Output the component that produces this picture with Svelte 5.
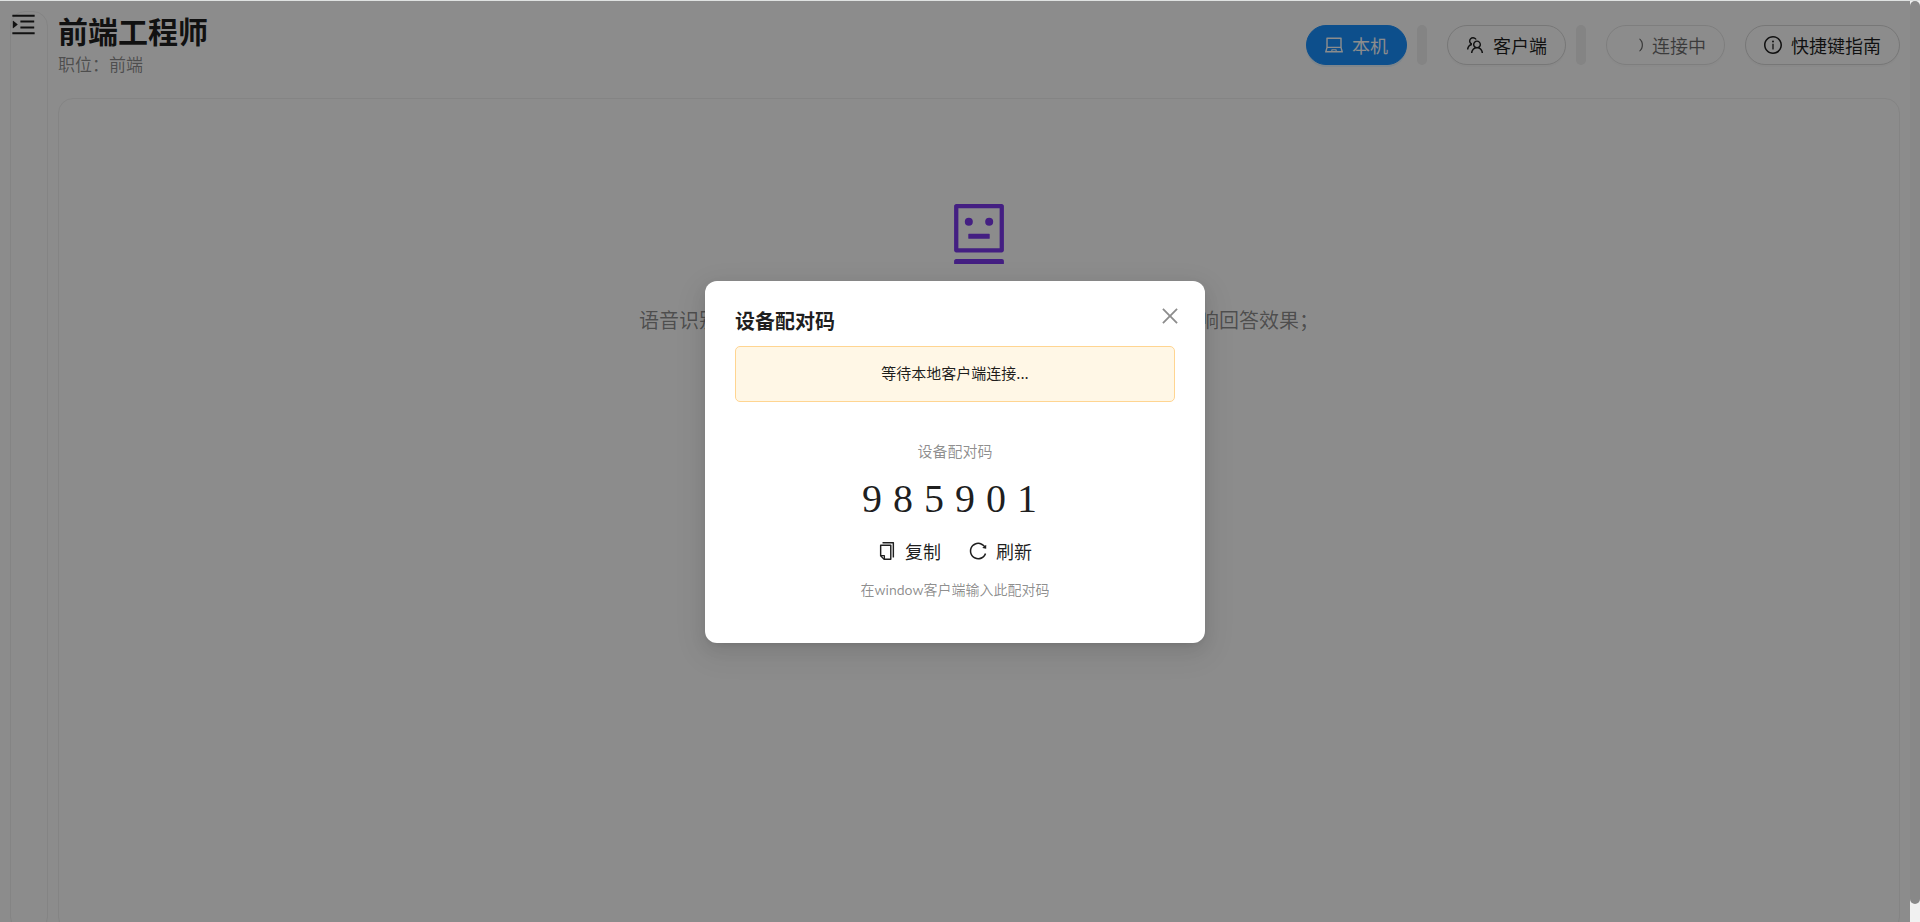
<script lang="ts">
  type IconName = 'menu' | 'laptop' | 'team' | 'loading' | 'info' | 'robot' | 'close' | 'copy' | 'reload';

  const iconPaths: Record<IconName, string[]> = {
    menu: ['M408 442h480c4.4 0 8-3.6 8-8v-56c0-4.4-3.6-8-8-8H408c-4.4 0-8 3.6-8 8v56c0 4.4 3.6 8 8 8zm-8 204c0 4.4 3.6 8 8 8h480c4.4 0 8-3.6 8-8v-56c0-4.4-3.6-8-8-8H408c-4.4 0-8 3.6-8 8v56zm504-486H120c-4.4 0-8 3.6-8 8v56c0 4.4 3.6 8 8 8h784c4.4 0 8-3.6 8-8v-56c0-4.4-3.6-8-8-8zm0 632H120c-4.4 0-8 3.6-8 8v56c0 4.4 3.6 8 8 8h784c4.4 0 8-3.6 8-8v-56c0-4.4-3.6-8-8-8zM142.4 642.1L298.7 519a8.84 8.84 0 000-13.9L142.4 381.9c-5.8-4.6-14.4-.5-14.4 6.9v246.3a8.9 8.9 0 0014.4 7z'],
    laptop: ['M956.9 845.1L896.4 632V168c0-17.7-14.3-32-32-32h-704c-17.7 0-32 14.3-32 32v464L67.9 845.1C60.4 866 75.8 888 98 888h828.8c22.2 0 37.6-22 30.1-42.9zM200.4 208h624v395h-624V208zm228.3 608l8.1-37h150.3l8.1 37H428.7zm224 0l-19.1-86.7c-.8-3.7-4.1-6.3-7.8-6.3H398.2c-3.8 0-7 2.6-7.8 6.3L371.3 816H151l42.3-149h638.2l42.3 149H652.7z'],
    team: ['M824.2 699.9a301.55 301.55 0 00-86.4-60.4C783.1 602.8 812 546.8 812 484c0-110.8-92.4-201.7-203.2-200-109.1 1.7-197 90.6-197 200 0 62.8 29 118.8 74.2 155.5a300.95 300.95 0 00-86.4 60.4C345 754.6 314 826.8 312 903.8a8 8 0 008 8.2h56c4.3 0 7.9-3.4 8-7.7 1.9-58 25.4-112.3 66.7-153.5A226.62 226.62 0 01612 684c60.9 0 118.2 23.7 161.3 66.8C814.6 792 838 846.3 840 904.3c.1 4.3 3.7 7.7 8 7.7h56a8 8 0 008-8.2c-2-77-33-149.2-87.8-203.9zM612 612c-34.2 0-66.4-13.3-90.5-37.5a126.86 126.86 0 01-37.5-91.8c.3-32.8 13.4-64.5 36.3-88 24-24.6 56.1-38.3 90.4-38.7 33.9-.3 66.8 12.9 91 36.6 24.8 24.3 38.4 56.8 38.4 91.4 0 34.2-13.3 66.3-37.5 90.5A127.3 127.3 0 01612 612zM361.5 510.4c-.9-8.7-1.4-17.5-1.4-26.4 0-15.9 1.5-31.4 4.3-46.5.7-3.6-1.2-7.3-4.5-8.8-13.6-6.1-26.1-14.5-36.9-25.1a127.54 127.54 0 01-38.7-95.4c.9-32.1 13.8-62.6 36.3-85.6 24.7-25.3 57.9-39.1 93.2-38.7 31.9.3 62.7 12.6 86 34.4 7.9 7.4 14.7 15.6 20.4 24.4 2 3.1 5.9 4.4 9.3 3.2 17.6-6.1 36.2-10.4 55.3-12.4 5.6-.6 8.8-6.6 6.3-11.6-32.5-64.3-98.9-108.7-175.7-109.9-110.9-1.7-203.3 89.2-203.3 199.9 0 62.8 28.9 118.8 74.2 155.5-31.8 14.7-61.1 35-86.5 60.4-54.8 54.7-85.8 126.9-87.8 204a8 8 0 008 8.2h56.1c4.3 0 7.9-3.4 8-7.7 1.9-58 25.4-112.3 66.7-153.5 29.4-29.4 65.4-49.8 104.7-59.7 3.9-1 6.5-4.7 6-8.7z'],
    loading: ['M988 548c-19.9 0-36-16.1-36-36 0-59.4-11.6-117-34.6-171.3a440.45 440.45 0 00-94.3-139.9 437.71 437.71 0 00-139.9-94.3C629 83.6 571.4 72 512 72c-19.9 0-36-16.1-36-36s16.1-36 36-36c69.1 0 136.2 13.5 199.3 40.3C772.3 66 827 103 874 150c47 47 83.9 101.8 109.7 162.7 26.7 63.1 40.2 130.2 40.2 199.3.1 19.9-16 36-35.9 36z'],
    info: [
      'M512 64C264.6 64 64 264.6 64 512s200.6 448 448 448 448-200.6 448-448S759.4 64 512 64zm0 820c-205.4 0-372-166.6-372-372s166.6-372 372-372 372 166.6 372 372-166.6 372-372 372z',
      'M464 336a48 48 0 1096 0 48 48 0 10-96 0zm72 112h-48c-4.4 0-8 3.6-8 8v272c0 4.4 3.6 8 8 8h48c4.4 0 8-3.6 8-8V456c0-4.4-3.6-8-8-8z'
    ],
    robot: [
      'M300 328a60 60 0 10120 0 60 60 0 10-120 0zM852 64H172c-17.7 0-32 14.3-32 32v660c0 17.7 14.3 32 32 32h680c17.7 0 32-14.3 32-32V96c0-17.7-14.3-32-32-32zm-32 660H204V128h616v596z',
      'M604 328a60 60 0 10120 0 60 60 0 10-120 0zm250.2 556H169.8c-16.5 0-29.8 14.3-29.8 32v36c0 4.4 3.3 8 7.4 8h729.1c4.1 0 7.4-3.6 7.4-8v-36c.1-17.7-13.2-32-29.7-32zM664 508H360c-4.4 0-8 3.6-8 8v60c0 4.4 3.6 8 8 8h304c4.4 0 8-3.6 8-8v-60c0-4.4-3.6-8-8-8z'
    ],
    close: ['M799.9 166.3c.1 0 .2.1.3.2l57.4 57.4c.1.1.2.2.2.3v.3c0 .1 0 .2-.2.3L569.9 512l287.7 287.6c.2.1.2.2.2.3v.2c0 .1 0 .2-.2.3l-57.4 57.4c-.1.1-.2.2-.3.2h-.2c-.1 0-.2 0-.3-.2L512 569.9 224.4 857.6c-.1.1-.2.2-.3.2h-.2c-.1 0-.2 0-.3-.2l-57.4-57.4c-.1-.1-.2-.2-.2-.3v-.2c0-.1 0-.2.2-.3L454.1 512 166.4 224.4c-.2-.1-.2-.2-.2-.3v-.2c0-.1 0-.2.2-.3l57.4-57.4c.1-.1.2-.2.3-.2h.2c.1 0 .2 0 .3.2L512 454.1l287.6-287.7c.1-.1.2-.1.3-.1z'],
    copy: ['M832 64H296c-4.4 0-8 3.6-8 8v56c0 4.4 3.6 8 8 8h496v688c0 4.4 3.6 8 8 8h56c4.4 0 8-3.6 8-8V96c0-17.7-14.3-32-32-32zM704 192H192c-17.7 0-32 14.3-32 32v530.7c0 8.5 3.4 16.6 9.4 22.6l173.3 173.3c2.2 2.2 4.7 4 7.4 5.5v1.9h4.2c3.5 1.3 7.2 2 11 2H704c17.7 0 32-14.3 32-32V224c0-17.7-14.3-32-32-32zM350 856.2L263.9 770H350v86.2zM664 888H414V746c0-22.1-17.9-40-40-40H232V264h432v624z'],
    reload: ['M909.1 209.3l-56.4 44.1C775.8 155.1 656.2 92 521.9 92 290 92 102.3 279.5 102 511.5 101.7 743.7 289.8 932 521.9 932c181.3 0 335.8-115 394.6-276.1 1.5-4.2-.7-8.9-4.9-10.3l-56.7-19.5a8 8 0 00-10.1 4.8c-1.8 5-3.8 10-5.9 14.9-17.3 41-42.1 77.8-73.7 109.4A344.77 344.77 0 01655.9 829c-42.3 17.9-87.4 27-133.8 27-46.5 0-91.5-9.1-133.8-27A341.5 341.5 0 01279 755.2a342.16 342.16 0 01-73.7-109.4c-17.9-42.4-27-87.4-27-133.9s9.1-91.5 27-133.9c17.3-41 42.1-77.8 73.7-109.4 31.6-31.6 68.4-56.4 109.3-73.8 42.3-17.9 87.4-27 133.8-27 46.5 0 91.5 9.1 133.8 27a341.5 341.5 0 01109.3 73.8c9.9 9.9 19.2 20.4 27.8 31.4l-60.2 47a8 8 0 003 14.1l175.6 43c5 1.2 9.9-2.6 9.9-7.7l.8-180.9c-.1-6.6-7.8-10.3-13-6.2z']
  };

  let open = $state(true);
  let code = $state('985901');

  function refresh() {
    code = String(Math.floor(100000 + Math.random() * 900000));
  }

  function copy() {
    navigator.clipboard?.writeText(code);
  }
</script>

{#snippet icon(name: IconName)}
  <svg
    class="icon icon--{name}"
    viewBox={name === 'loading' ? '0 0 1024 1024' : '64 64 896 896'}
    fill="currentColor"
    aria-hidden="true"
  >
    {#each iconPaths[name] as d}
      <path {d} />
    {/each}
  </svg>
{/snippet}

<div class="window">
  <div class="viewport">
    <div class="layout">
      <aside class="sider">
        <button class="menu-btn" aria-label="展开菜单">{@render icon('menu')}</button>
      </aside>

      <main class="main">
        <header class="header">
          <div>
            <h1>前端工程师</h1>
            <p class="position">职位：前端</p>
          </div>
          <div class="toolbar">
            <div class="step">
              <button class="pill pill--primary">{@render icon('laptop')}本机</button>
              <span class="bar"></span>
            </div>
            <div class="step">
              <button class="pill">{@render icon('team')}客户端</button>
              <span class="bar"></span>
            </div>
            <button class="pill pill--loading" disabled>{@render icon('loading')}连接中</button>
            <button class="pill">{@render icon('info')}快捷键指南</button>
          </div>
        </header>

        <section class="panel">
          {@render icon('robot')}
          <p>语音识别可能存在少量误差，系统会自动理解语义修正，不会影响回答效果；</p>
        </section>
      </main>
    </div>

    {#if open}
      <div class="mask">
        <div class="modal" role="dialog" aria-modal="true" aria-labelledby="pair-title">
          <button class="close-btn" aria-label="关闭" onclick={() => open = false}>
            {@render icon('close')}
          </button>
          <h2 id="pair-title">设备配对码</h2>
          <div class="notice" role="status">等待本地客户端连接...</div>
          <div class="pairing">
            <p class="label">设备配对码</p>
            <p class="code">{code}</p>
            <div class="actions">
              <button class="text-btn" onclick={copy}>{@render icon('copy')}复制</button>
              <button class="text-btn" onclick={refresh}>{@render icon('reload')}刷新</button>
            </div>
            <p class="hint">在window客户端输入此配对码</p>
          </div>
        </div>
      </div>
    {/if}
  </div>

  <div class="scrollbar"><div class="thumb"></div></div>
</div>

<style>
  :global(body) {
    margin: 0;
    overflow: hidden;
  }

  .window {
    display: grid;
    grid-template-columns: 1fr 10px;
    box-sizing: border-box;
    height: 100vh;
    border-top: 1px solid #dfe2e1;
    background: #fff;
    color: rgba(0, 0, 0, 0.88);
    font-family: "Noto Sans CJK SC", sans-serif;
    font-size: 18px;
  }

  h1, h2, p {
    margin: 0;
  }

  button {
    display: inline-flex;
    align-items: center;
    padding: 0;
    border: 0;
    background: none;
    color: inherit;
    font: inherit;
    cursor: pointer;
  }

  .icon {
    flex-shrink: 0;
    width: 18px;
    height: 18px;
  }
  .icon--menu {
    width: 25px;
    height: 25px;
  }
  .icon--robot {
    width: 60px;
    height: 60px;
    color: #7c3aed;
  }
  .icon--close {
    width: 20px;
    height: 20px;
  }
  .icon--loading {
    transform: rotate(45deg);
  }

  /* Page */
  .viewport {
    position: relative;
    overflow: hidden;
  }
  .layout {
    display: flex;
    gap: 10px;
    box-sizing: border-box;
    height: calc(100% + 20px);
    padding: 10px;
  }
  .sider {
    box-sizing: border-box;
    width: 38px;
    flex-shrink: 0;
    border: 1px solid #f0f0f0;
    border-radius: 15px;
  }
  .main {
    display: flex;
    flex: 1;
    flex-direction: column;
    gap: 19px;
    min-width: 0;
  }

  /* Header */
  .header {
    display: flex;
    align-items: flex-start;
    justify-content: space-between;
    min-height: 68px;
  }
  h1 {
    font-size: 30px;
    line-height: 38px;
    font-weight: 700;
  }
  .position {
    color: rgba(0, 0, 0, 0.45);
    font-size: 17px;
    line-height: 30px;
  }
  .toolbar {
    display: flex;
    gap: 20px;
    padding-top: 14px;
  }
  .step {
    display: flex;
    gap: 10px;
  }
  .bar {
    width: 10px;
    border-radius: 5px;
    background: #f0f0f0;
  }
  .pill {
    gap: 9px;
    box-sizing: border-box;
    height: 40px;
    padding: 0 18px;
    border: 1px solid #d9d9d9;
    border-radius: 20px;
    background: #fff;
    box-shadow: 0 2px 0 rgba(0, 0, 0, 0.02);
  }
  .pill--primary {
    border-color: #1890ff;
    background: #1890ff;
    box-shadow: 0 2px 0 rgba(5, 145, 255, 0.1);
    color: #fff;
  }
  .pill--loading {
    opacity: 0.65;
    cursor: default;
  }

  /* Content panel */
  .panel {
    display: flex;
    flex: 1;
    flex-direction: column;
    align-items: center;
    gap: 40px;
    padding-top: 105px;
    border: 1px solid #f0f0f0;
    border-radius: 15px;
    color: rgba(0, 0, 0, 0.45);
    font-size: 20px;
    line-height: 32px;
  }

  /* Modal */
  .mask {
    position: absolute;
    inset: 0;
    display: flex;
    align-items: center;
    justify-content: center;
    background: rgba(0, 0, 0, 0.45);
  }
  .modal {
    position: relative;
    box-sizing: border-box;
    width: 500px;
    padding: 25px 30px;
    border-radius: 12px;
    background: #fff;
    box-shadow:
      0 6px 16px 0 rgba(0, 0, 0, 0.08),
      0 3px 6px -4px rgba(0, 0, 0, 0.12),
      0 9px 28px 8px rgba(0, 0, 0, 0.05);
  }
  .close-btn {
    position: absolute;
    top: 20px;
    right: 20px;
    justify-content: center;
    width: 30px;
    height: 30px;
    color: rgba(0, 0, 0, 0.45);
  }
  h2 {
    margin-bottom: 10px;
    font-size: 20px;
    line-height: 30px;
    font-weight: 700;
  }
  .notice {
    padding: 14px 15px 16px;
    border: 1px solid #ffd591;
    border-radius: 5px;
    background: #fff7e6;
    font-size: 15px;
    line-height: 24px;
    text-align: center;
  }
  .pairing {
    display: flex;
    flex-direction: column;
    align-items: center;
    gap: 8px;
    padding: 37px 0 17px;
  }
  .label {
    color: rgba(0, 0, 0, 0.45);
    font-size: 15px;
    line-height: 24px;
  }
  .code {
    padding-top: 4px;
    font-family: "Liberation Serif", serif;
    font-size: 40px;
    line-height: 48px;
    letter-spacing: 11px;
  }
  .actions {
    display: flex;
    gap: 12px;
  }
  .text-btn {
    gap: 9px;
    height: 40px;
    padding: 0 8px;
  }
  .hint {
    color: rgba(0, 0, 0, 0.45);
    font-family: Lato, "Noto Sans CJK SC", sans-serif;
    font-size: 14px;
    line-height: 22px;
  }

  /* Scrollbar */
  .scrollbar {
    background: #f1f1f1;
  }
  .thumb {
    height: 98%;
    border-radius: 5px;
    background: #888;
  }
</style>
